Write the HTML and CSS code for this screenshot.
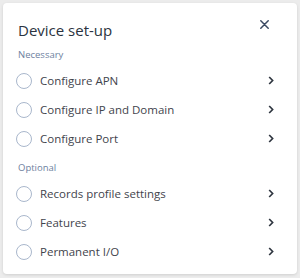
FILE: index.html
```html
<!DOCTYPE html>
<html lang="en">
<head>
    <meta charset="UTF-8">
    <meta name="viewport" content="width=device-width, initial-scale=1.0">
    <title>Device set-up</title>
    <link rel="stylesheet" href="styles.css">
</head>
<body>
    <div class="card">
        <div class="card-header">
            <h1 class="title">Device set-up</h1>
            <button class="close" aria-label="Close">
                <svg width="9" height="9" viewBox="0 0 9 9"><path d="M0.8 0.8L8.2 8.2M8.2 0.8L0.8 8.2" stroke="#3b4a63" stroke-width="1.5" stroke-linecap="round"/></svg>
            </button>
        </div>

        <div class="section-label">Necessary</div>
        <ul class="steps">
            <li class="step"><span class="dot"></span><span class="step-name">Configure APN</span><svg class="chev" width="6" height="9" viewBox="0 0 6 9"><path d="M1.2 1L4.6 4.5L1.2 8" fill="none" stroke="#2f3640" stroke-width="1.7"/></svg></li>
            <li class="step"><span class="dot"></span><span class="step-name">Configure IP and Domain</span><svg class="chev" width="6" height="9" viewBox="0 0 6 9"><path d="M1.2 1L4.6 4.5L1.2 8" fill="none" stroke="#2f3640" stroke-width="1.7"/></svg></li>
            <li class="step"><span class="dot"></span><span class="step-name">Configure Port</span><svg class="chev" width="6" height="9" viewBox="0 0 6 9"><path d="M1.2 1L4.6 4.5L1.2 8" fill="none" stroke="#2f3640" stroke-width="1.7"/></svg></li>
        </ul>

        <div class="section-label optional">Optional</div>
        <ul class="steps">
            <li class="step"><span class="dot"></span><span class="step-name">Records profile settings</span><svg class="chev" width="6" height="9" viewBox="0 0 6 9"><path d="M1.2 1L4.6 4.5L1.2 8" fill="none" stroke="#2f3640" stroke-width="1.7"/></svg></li>
            <li class="step"><span class="dot"></span><span class="step-name">Features</span><svg class="chev" width="6" height="9" viewBox="0 0 6 9"><path d="M1.2 1L4.6 4.5L1.2 8" fill="none" stroke="#2f3640" stroke-width="1.7"/></svg></li>
            <li class="step"><span class="dot"></span><span class="step-name">Permanent I/O</span><svg class="chev" width="6" height="9" viewBox="0 0 6 9"><path d="M1.2 1L4.6 4.5L1.2 8" fill="none" stroke="#2f3640" stroke-width="1.7"/></svg></li>
        </ul>
    </div>
</body>
</html>
```

FILE: styles.css
```css
body {
    margin: 0;
    background: #ececec;
    font-family: "Open Sans", "Noto Sans", sans-serif;
}
.card {
    margin: 3px;
    width: 294px;
    height: 271px;
    box-sizing: border-box;
    background: #fff;
    border-radius: 4px;
    box-shadow: 0 1px 3px rgba(0, 0, 0, 0.12);
}
.card-header {
    display: flex;
    justify-content: space-between;
    padding: 17px 28px 0 15px;
}
.title {
    margin: 0;
    font-size: 15px;
    line-height: 20px;
    font-weight: 500;
    color: #2b3340;
}
.close {
    border: none;
    background: none;
    padding: 0;
    margin-top: 0;
    width: 9px;
    height: 9px;
    display: flex;
    cursor: pointer;
}
.section-label {
    margin: 8px 0 4px 15px;
    font-size: 9.5px;
    line-height: 14px;
    color: #6e81a0;
}
.section-label.optional {
    margin-top: 8px;
    margin-bottom: 4px;
}
.steps {
    list-style: none;
    margin: 0;
    padding: 0;
}
.step {
    display: flex;
    align-items: center;
    height: 29px;
    padding: 0 23px 0 13px;
}
.dot {
    width: 14px;
    height: 14px;
    border: 1.4px solid #a9b7cc;
    border-radius: 50%;
    flex: none;
}
.step-name {
    flex: 1;
    margin-left: 8px;
    font-size: 11.5px;
    color: #3f444c;
}
.chev {
    flex: none;
}
```
